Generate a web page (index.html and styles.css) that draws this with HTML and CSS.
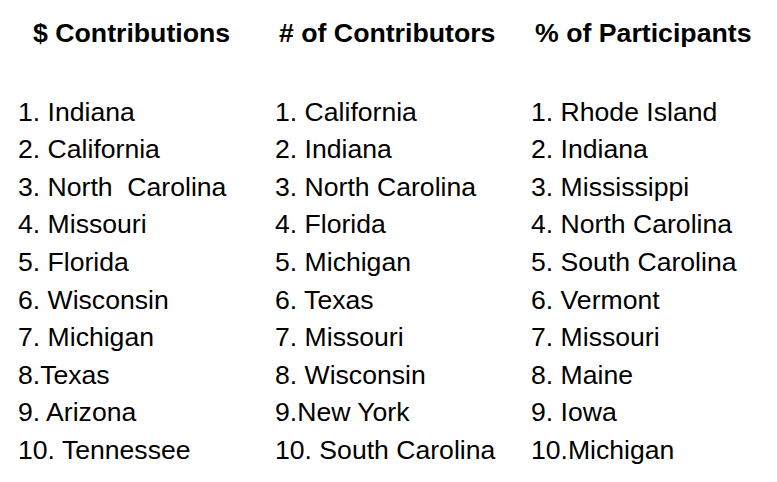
FILE: index.html
```html
<!DOCTYPE html>
<html lang="en">

<head>
    <meta charset="UTF-8">
    <meta name="viewport" content="width=device-width, initial-scale=1.0">
    <title>State Rankings</title>
    <link rel="stylesheet" href="styles.css">
</head>

<body>
    <div class="rankings">
        <div class="column">
            <h2 class="heading heading-first">$ Contributions</h2>
            <ol class="list">
                <li>1. Indiana</li>
                <li>2. California</li>
                <li>3. North&nbsp; Carolina</li>
                <li>4. Missouri</li>
                <li>5. Florida</li>
                <li>6. Wisconsin</li>
                <li>7. Michigan</li>
                <li>8.Texas</li>
                <li>9. Arizona</li>
                <li>10. Tennessee</li>
            </ol>
        </div>

        <div class="column">
            <h2 class="heading heading-second"># of Contributors</h2>
            <ol class="list">
                <li>1. California</li>
                <li>2. Indiana</li>
                <li>3. North Carolina</li>
                <li>4. Florida</li>
                <li>5. Michigan</li>
                <li>6. Texas</li>
                <li>7. Missouri</li>
                <li>8. Wisconsin</li>
                <li>9.New York</li>
                <li>10. South Carolina</li>
            </ol>
        </div>

        <div class="column">
            <h2 class="heading heading-third">% of Participants</h2>
            <ol class="list">
                <li>1. Rhode Island</li>
                <li>2. Indiana</li>
                <li>3. Mississippi</li>
                <li>4. North Carolina</li>
                <li>5. South Carolina</li>
                <li>6. Vermont</li>
                <li>7. Missouri</li>
                <li>8. Maine</li>
                <li>9. Iowa</li>
                <li>10.Michigan</li>
            </ol>
        </div>
    </div>
</body>

</html>
```

FILE: styles.css
```css
body {
    font-family: 'Liberation Sans', Arial, sans-serif;
    background-color: #fff;
    color: #000;
    margin: 0;
    padding: 0;
}

.rankings {
    display: grid;
    grid-template-columns: 257px 256px 1fr;
    padding: 15px 0 0 18px;
}

.column {
    display: flex;
    flex-direction: column;
}

.heading {
    font-size: 26.7px;
    font-weight: bold;
    line-height: 37.6px;
    margin: 0 0 41px 0;
    white-space: nowrap;
}

/* headings sit a little right of their lists */
.heading-first {
    padding-left: 15px;
}

.heading-second {
    padding-left: 4px;
}

.heading-third {
    padding-left: 4px;
}

.list {
    list-style: none;
    margin: 0;
    padding: 0;
    font-size: 26.6px;
    line-height: 37.6px;
    white-space: nowrap;
}
```
